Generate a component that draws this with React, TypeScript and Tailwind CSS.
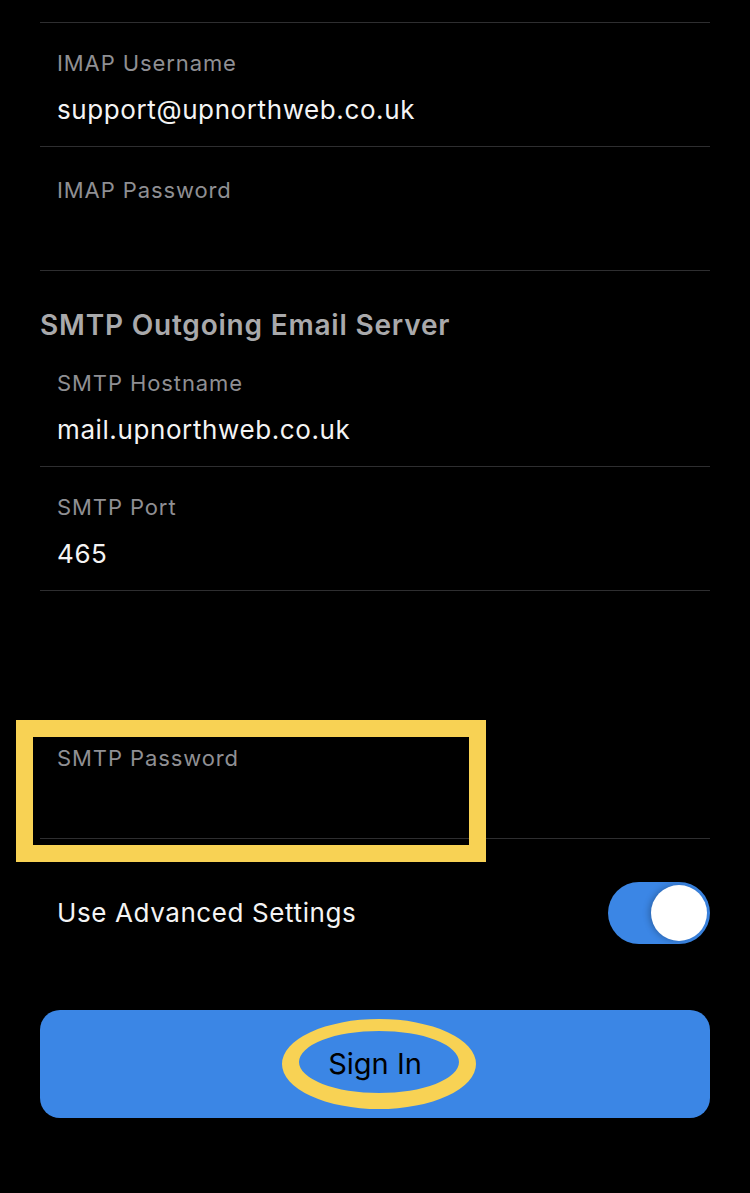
import { ReactNode } from 'react'

function Field({ label, value, top = 'pt-[26px]' }: { label: string; value?: string; top?: string }) {
  return (
    <div className={`h-[124px] border-b border-[#2e2e30] pl-[17px] ${top}`}>
      <div className="text-[22px] leading-[28px] tracking-[0.9px] text-[#8f8f93]">{label}</div>
      {value && (
        <div className="mt-[17px] text-[26px] leading-[32px] tracking-[0.6px] text-[#f4f4f4]">{value}</div>
      )}
    </div>
  )
}

function Heading({ children }: { children: ReactNode }) {
  return (
    <div className="flex h-[72px] items-end pb-[1px]">
      <h2 className="text-[28px] font-semibold leading-[34px] tracking-[0.8px] text-[#a9a9ab]">{children}</h2>
    </div>
  )
}

function Toggle({ on }: { on: boolean }) {
  return (
    <div
      className={[
        'flex h-[62px] w-[102px] items-center rounded-full p-[3px]',
        on ? 'justify-end bg-[#3b86e5]' : 'justify-start bg-[#39393d]',
      ].join(' ')}
    >
      <div className="h-[56px] w-[56px] rounded-full bg-white shadow-[-2px_0_6px_rgba(0,0,0,0.25)]" />
    </div>
  )
}

export default function App() {
  return (
    <div className="min-h-[1193px] w-[750px] bg-black font-['Inter',sans-serif]">
      <div className="relative px-10 pt-[22px]">
        <div className="border-t border-[#2e2e30]" />
        <Field label="IMAP Username" value="support@upnorthweb.co.uk" />
        <Field label="IMAP Password" top="pt-[29px]" />

        <Heading>SMTP Outgoing Email Server</Heading>
        <Field label="SMTP Hostname" value="mail.upnorthweb.co.uk" />
        <Field label="SMTP Port" value="465" />

        <div className="h-[124px]" />
        <Field label="SMTP Password" top="pt-[29px]" />

        {/* annotation box over the password field */}
        <div className="pointer-events-none absolute left-[16px] top-[720px] h-[142px] w-[470px] border-[17px] border-[#f8d254]" />

        <div className="flex items-center justify-between pb-[66px] pl-[17px] pt-[43px]">
          <span className="text-[26px] leading-[32px] tracking-[0.6px] text-[#f4f4f4]">Use Advanced Settings</span>
          <Toggle on />
        </div>

        <button className="relative flex h-[108px] w-full items-center justify-center rounded-[20px] bg-[#3b86e5]">
          <span className="text-[29px] leading-[36px] text-black">Sign In</span>
          <svg
            className="pointer-events-none absolute left-[241px] top-[8px]"
            width="196"
            height="92"
            viewBox="0 0 196 92"
          >
            <path
              fillRule="evenodd"
              fill="#f8d254"
              d="M1 46 A97 45 0 1 0 195 46 A97 45 0 1 0 1 46 Z M18 44 A80 31 0 1 0 178 44 A80 31 0 1 0 18 44 Z"
            />
          </svg>
        </button>
      </div>
    </div>
  )
}
